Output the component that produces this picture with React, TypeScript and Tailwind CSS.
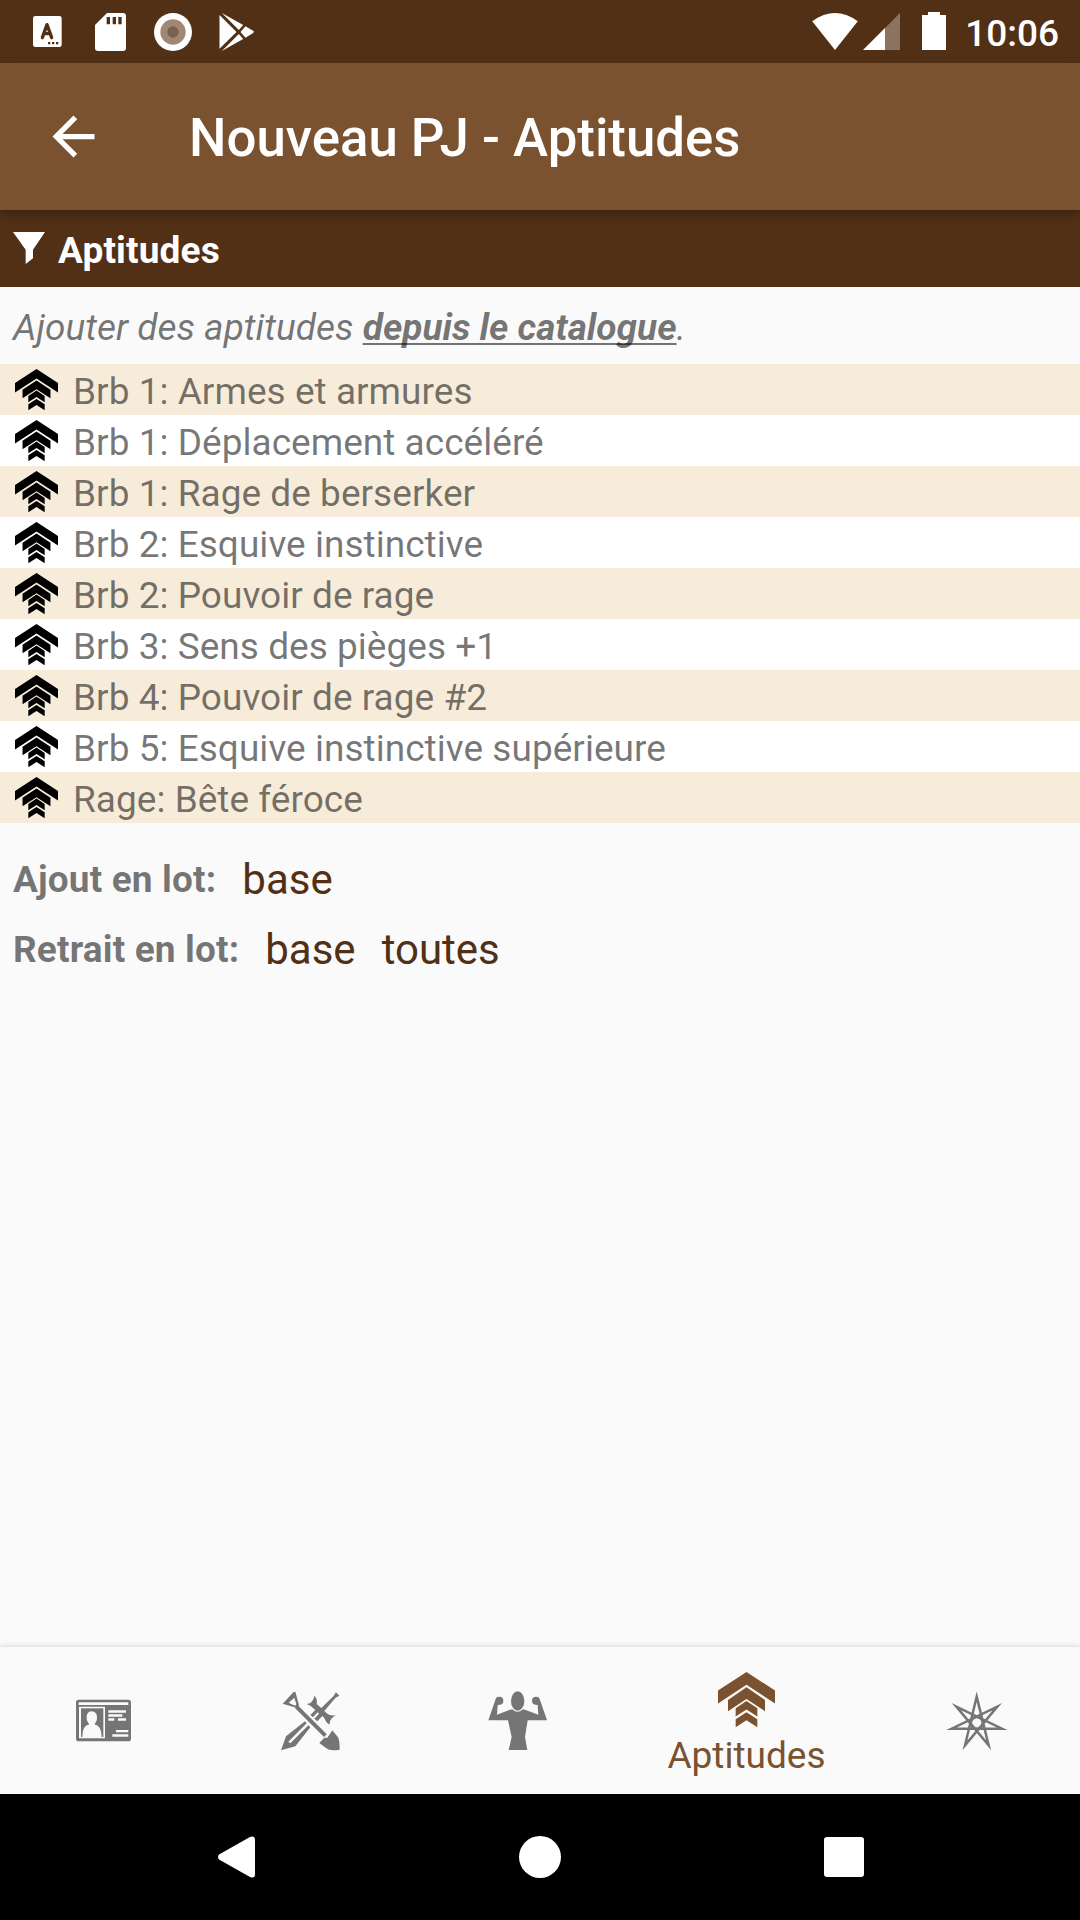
import React from "react";

function RankIcon({ className }: { className: string }) {
  return (
    <svg viewBox="0 0 171 167" preserveAspectRatio="none" className={className} fill="currentColor">
      <path d="M85.5 0 171 56V95L85.5 38 0 95V56Z" />
      <path d="M85.5 46 141 84V118L85.5 81 30 118V84Z" />
      <path d="M85.5 87 118 109V134L85.5 113 53 134V109Z" />
      <path d="M85.5 121 118 142V166L85.5 145 53 166V142Z" />
    </svg>
  );
}

const abilities = [
  "Brb 1: Armes et armures",
  "Brb 1: Déplacement accéléré",
  "Brb 1: Rage de berserker",
  "Brb 2: Esquive instinctive",
  "Brb 2: Pouvoir de rage",
  "Brb 3: Sens des pièges +1",
  "Brb 4: Pouvoir de rage #2",
  "Brb 5: Esquive instinctive supérieure",
  "Rage: Bête féroce",
];

function StatusBar() {
  return (
    <div className="flex h-[63px] shrink-0 items-start bg-[#523015] text-white">
      <svg viewBox="0 0 87 93" className="mt-4 ml-[33px] h-[31px] w-[29px]">
        <rect width="86" height="93" rx="7" fill="#fff" />
        <path d="M28 65 42 26 56 65M32 53H52" fill="none" stroke="#523015" strokeWidth="10" strokeLinecap="round" strokeLinejoin="round" />
        <path d="M45 78h7v7h-7zM57 78h7v7h-7zM69 78h7v7h-7z" fill="#523015" />
      </svg>
      <svg viewBox="0 0 93 114" className="mt-[12.5px] ml-[33px] h-[38px] w-[31px]">
        <path d="M36 0H84Q93 0 93 9V105Q93 114 84 114H9Q0 114 0 105V36Z" fill="#fff" />
        <path d="M35 12h10v22H35zM53 12h10v22H53zM70 12h10v22H70z" fill="#523015" />
      </svg>
      <svg viewBox="0 0 114 114" className="mt-[12.5px] ml-7 h-[38px] w-[38px]">
        <circle cx="57" cy="57" r="57" fill="#fff" />
        <circle cx="57" cy="57" r="38" fill="#a18875" />
        <circle cx="57" cy="57" r="17" fill="#7c624c" />
      </svg>
      <svg viewBox="0 0 104 114" className="mt-[12.5px] ml-[27px] h-[38px] w-[35px]" fill="#fff">
        <path d="M1 6 52 57 1 107Z" />
        <path d="M8 0 72 36 59 51Z" />
        <path d="M8 114 72 78 59 63Z" />
        <path d="M79 40 103 54Q105 57 102 60L79 74 64 57Z" />
      </svg>
      <svg viewBox="0 0 138 112" className="mt-[13px] ml-auto h-[37px] w-[46px]">
        <path d="M0 25Q69 -25 138 25L69 112Z" fill="#fff" />
      </svg>
      <svg viewBox="0 0 111 111" className="mt-[13px] ml-[5px] h-[37px] w-[37px]">
        <path d="M111 0V111H66V45Z" fill="#8b735f" />
        <path d="M66 45V111H0Z" fill="#fff" />
      </svg>
      <svg viewBox="0 0 72 114" className="mt-[12px] ml-[22px] h-[38px] w-6">
        <path d="M18 0H54V9H72V114H0V9H18Z" fill="#fff" />
      </svg>
      <span className="mt-3 mr-[21px] ml-[19px] leading-[43px] font-medium">10:06</span>
    </div>
  );
}

function BottomNav() {
  return (
    <nav className="grid h-[147px] shrink-0 grid-cols-[207px_207px_206px_253px_207px] bg-[#fafafa] text-[#757575] shadow-[0_-1px_5px_rgba(0,0,0,0.14)]">
      <div className="flex items-center justify-center pt-px">
        <svg viewBox="45 60 171 130" className="h-[43.3px] w-[57px]">
          <rect x="48" y="62" width="165" height="125" rx="8" fill="currentColor" />
          <g fill="#fafafa">
            <path d="M56 70H205V78H56ZM57 83H135V178H57Z" />
            <path d="M145 94H198V101H145ZM145 106H187V113H145ZM145 118H163V125H145ZM174 118H198V125H174ZM168 153H205V160H168ZM157 166H205V173H157Z" />
          </g>
          <path d="M63 88H130V174H63Z" fill="currentColor" />
          <path d="M67 174Q67 139 88 136Q79 127 80 112Q82 97 96 97Q109 98 111 112Q112 127 103 136Q124 139 125 174Z" fill="#fafafa" />
        </svg>
      </div>
      <div className="flex items-center justify-center">
        <svg viewBox="48 45 180 180" className="h-[60px] w-[60px]">
          <path d="M48 223 63 181 120 136 125 142 70 197 76 202 130 148 136 154 91 211Z" fill="currentColor" />
          <path d="M149 59Q158 70 155 84L169 96 205 61 213 49 223 59 211 66 178 105 184 111Q195 121 214 118Q194 126 193 146Q181 138 178 126L172 120 157 136 148 128 162 113 158 109 144 124 136 117 151 102 145 97Q137 88 125 84Q142 84 149 59Z" fill="currentColor" />
          <path d="M91 47 101 83Q105 96 89 94L53 83 85 49Z" fill="currentColor" />
          <path d="M71 80 88 65 94 85Q93 90 87 88Z" fill="#fafafa" />
          <path d="M94 92 181 179" stroke="currentColor" strokeWidth="12" />
          <path d="M202 163 219 184Q224 191 224 221Q194 226 184 217L163 201 178 185 187 185Z" fill="currentColor" />
        </svg>
      </div>
      <div className="flex items-start justify-center pt-[43px] pl-[2px]">
        <svg viewBox="39 45 180 180" className="h-[60px] w-[60px]" fill="currentColor">
          <ellipse cx="128" cy="78" rx="20" ry="29" />
          <circle cx="73" cy="77" r="12" />
          <circle cx="183" cy="77" r="12" />
          <path d="M61 75 82 84 68 91 66 119 105 104 112 103Q127 118 144 103L150 104 190 119 188 91 176 84 195 75 216 136H158L150 186 157 225H101L110 186 99 136H40Z" />
        </svg>
      </div>
      <div className="flex flex-col items-center text-[#7a5230]">
        <RankIcon className="mt-[25px] h-[55.5px] w-[57px]" />
        <span className="mt-[6px] leading-[43px]">Aptitudes</span>
      </div>
      <div className="flex items-center justify-center">
        <svg viewBox="50 45 180 180" className="h-[60px] w-[60px] overflow-visible" fill="none" stroke="currentColor" strokeWidth="7.5" strokeMiterlimit="10">
          <path d="M139 62 175 208 78 92 215 158H64L201 92 104 208Z" />
          <circle cx="139.500" cy="141" r="18" />
        </svg>
      </div>
    </nav>
  );
}

export default function App() {
  return (
    <div className="flex h-[1920px] w-[1080px] flex-col overflow-hidden bg-[#fafafa] font-['Roboto',sans-serif] text-[37px] leading-[43px] text-black/54">
      <StatusBar />
      <header className="relative z-10 flex h-[147px] shrink-0 items-center bg-[#7a5230] text-white shadow-[0_4px_10px_rgba(0,0,0,0.3)]">
        <svg viewBox="0 0 24 24" className="ml-[42px] h-[63px] w-[63px]" fill="currentColor">
          <path d="M20 11H7.830l5.590-5.590L12 4l-8 8 8 8 1.410-1.410L7.830 13H20v-2z" />
        </svg>
        <h1 className="mt-[3px] ml-[84px] text-[52.8px] leading-[62px] font-medium">Nouveau PJ - Aptitudes</h1>
      </header>
      <div className="flex h-[77px] shrink-0 items-center bg-[#523015] text-white">
        <svg viewBox="0 0 96 96" className="mb-px ml-[13px] h-8 w-8" fill="currentColor">
          <path d="M0 0H96L60 53V79L38 96V53Z" />
        </svg>
        <h2 className="mt-[3px] ml-[13px] font-bold tracking-[0.15px]">Aptitudes</h2>
      </div>
      <p className="flex h-[77px] shrink-0 items-center pt-[3px] pl-[13px] italic">
        <span className="whitespace-pre">Ajouter des aptitudes <b className="font-bold underline decoration-2 underline-offset-[3px] [text-decoration-skip-ink:none]">depuis le catalogue</b>.</span>
      </p>
      <ul>
        {abilities.map((name) => (
          <li key={name} className="flex h-[51px] items-center bg-white odd:bg-[#f7ecda]">
            <RankIcon className="ml-[15px] h-[41.5px] w-[43px] text-black" />
            <span className="mt-[3px] ml-[15px] tracking-[0.03px]">{name}</span>
          </li>
        ))}
      </ul>
      <div className="mt-8 flex h-[50px] items-center pl-[13px]">
        <b className="mb-[2px] font-bold tracking-[0.15px]">Ajout en lot:</b>
        <span className="ml-[26px] text-[42px] leading-[50px] text-[#523015]">base</span>
      </div>
      <div className="mt-5 flex h-[50px] items-center pl-[13px]">
        <b className="mb-[2px] font-bold tracking-[0.15px]">Retrait en lot:</b>
        <span className="ml-[26px] text-[42px] leading-[50px] text-[#523015]">base</span>
        <span className="ml-[26px] text-[42px] leading-[50px] text-[#523015]">toutes</span>
      </div>
      <div className="flex-1" />
      <BottomNav />
      <div className="relative flex h-[126px] shrink-0 items-center bg-black">
        <svg viewBox="0 0 37 42" className="ml-[217.5px] h-[42px] w-[37px]" fill="#fff">
          <path d="M1 18.500 32 1Q37-1 37 4V38Q37 43 32 41L1 23.500Q-1 21 1 18.500Z" />
        </svg>
        <div className="ml-[264.5px] size-[42px] rounded-full bg-white" />
        <div className="ml-[263px] size-10 rounded-[3px] bg-white" />
      </div>
    </div>
  );
}
